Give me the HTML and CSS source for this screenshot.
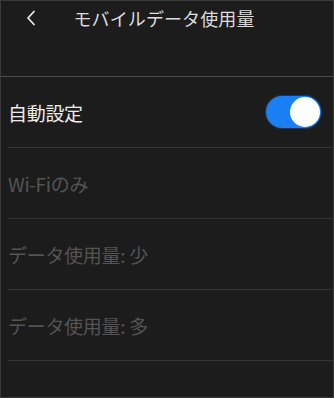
FILE: index.html
```html
<!DOCTYPE html>
<html lang="ja">
<head>
<meta charset="utf-8">
<link rel="stylesheet" href="styles.css">
</head>
<body>
<div class="screen">
  <header class="header">
    <div class="nav">
      <span class="back">
        <svg width="10" height="16" viewBox="0 0 10 16"><path d="M8 1.5 L2 8 L8 14.5" fill="none" stroke="#e8e8e8" stroke-width="1.8" stroke-linecap="round" stroke-linejoin="round"/></svg>
      </span>
      <h1 class="title">モバイルデータ使用量</h1>
    </div>
  </header>
  <ul class="list">
    <li class="row"><span class="label">自動設定</span><span class="toggle"><span class="knob"></span></span></li>
    <li class="row"><span class="label disabled">Wi-Fiのみ</span></li>
    <li class="row"><span class="label disabled">データ使用量: 少</span></li>
    <li class="row"><span class="label disabled">データ使用量: 多</span></li>
  </ul>
</div>
</body>
</html>
```

FILE: styles.css
```css
* { box-sizing: border-box; }
html, body { margin: 0; padding: 0; background: #1c1c1c; }
.screen {
  width: 334px;
  height: 398px;
  background: #1c1c1c;
  border: 1px solid #3a3a3a;
  font-family: "Noto Sans CJK JP", "Noto Sans", sans-serif;
  overflow: hidden;
}
.header {
  height: 76px;
  border-bottom: 1px solid #4c4c4c;
}
.nav {
  position: relative;
  height: 33px;
  display: flex;
  align-items: center;
  justify-content: center;
  padding-right: 6px;
}
.back {
  position: absolute;
  left: 25px;
  top: 9px;
  display: flex;
}
.title {
  margin: 0;
  font-size: 18px;
  font-weight: 400;
  color: #dcdcdc;
  letter-spacing: 0.1px;
}
.list { list-style: none; margin: 0; padding: 0; }
.row {
  height: 71px;
  margin-left: 7px;
  border-bottom: 1px solid #343434;
  display: flex;
  align-items: center;
  justify-content: space-between;
  padding-right: 12px;
}
.label {
  font-size: 19px;
  color: #ececec;
  letter-spacing: -0.3px;
}
.label.disabled { color: #545454; }
.toggle {
  width: 55px;
  height: 32px;
  border-radius: 16px;
  background: #1a7ff2;
  box-shadow: 0 0 0 1px #1f3558;
  display: flex;
  align-items: center;
  justify-content: flex-end;
  padding: 1px;
}
.knob {
  width: 30px;
  height: 30px;
  border-radius: 50%;
  background: #ffffff;
}
```
